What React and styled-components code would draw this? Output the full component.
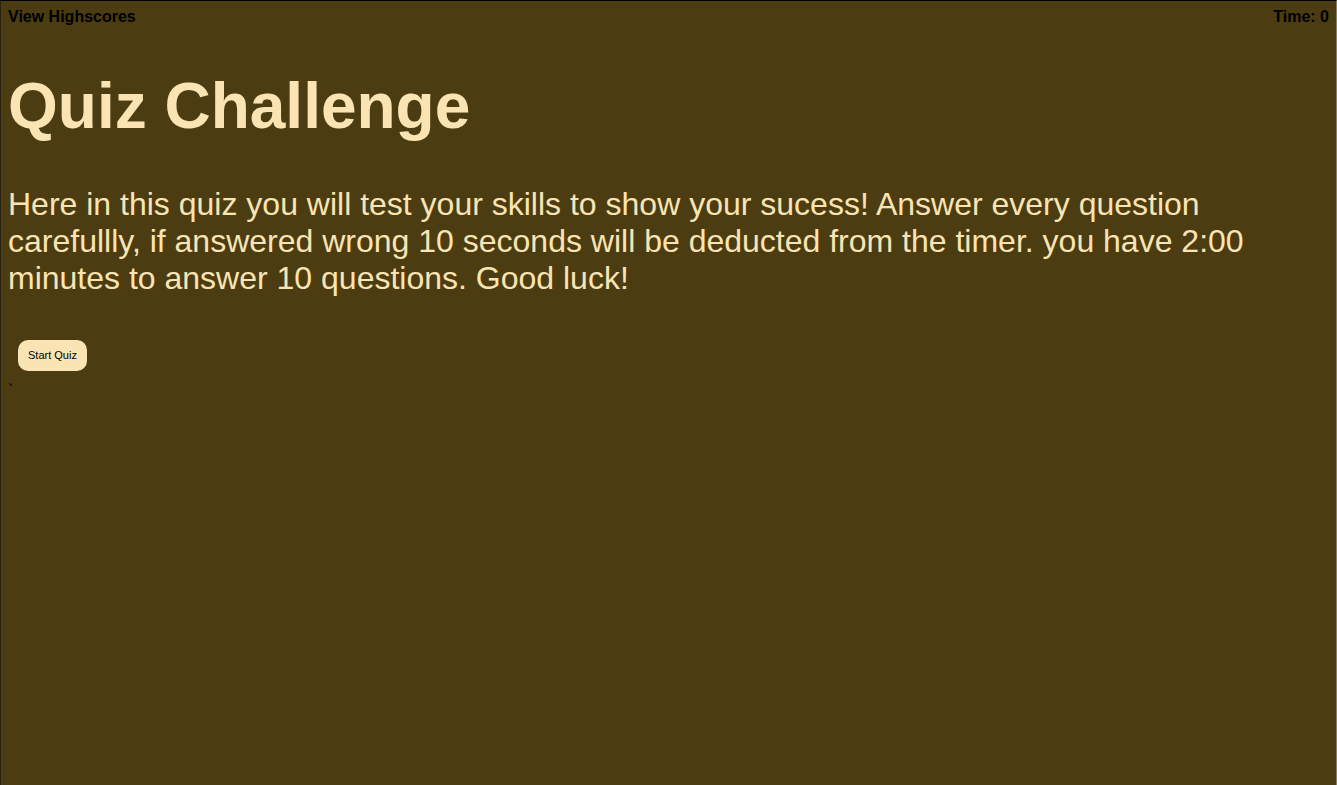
import styled, { createGlobalStyle } from "styled-components";

const GlobalStyle = createGlobalStyle`
  html, body {
    margin: 0;
    height: 100%;
  }
  body {
    font-family: "Liberation Sans", Arial, sans-serif;
    background-color: #4b3c12;
  }
`;

export default () => (
  <Page>
    <GlobalStyle />
    <Header>
      <HeaderItem>View Highscores</HeaderItem>
      <HeaderItem>Time: 0</HeaderItem>
    </Header>
    <Title>Quiz Challenge</Title>
    <Intro>
      Here in this quiz you will test your skills to show your sucess! Answer
      every question carefullly, if answered wrong 10 seconds will be deducted
      from the timer. you have 2:00 minutes to answer 10 questions. Good luck!
    </Intro>
    <StartButton>Start Quiz</StartButton>
    <Stray>`</Stray>
  </Page>
);

const Page = styled.div`
  box-sizing: border-box;
  min-height: 100vh;
  padding: 0 7px;
  background-color: #4b3c12;
  border-top: 1px solid #000;
  border-left: 1px solid #2b2410;
  border-right: 1px solid #8a8060;
  overflow: hidden;
`;

const Header = styled.div`
  display: flex;
  justify-content: space-between;
  padding-top: 7px;
`;

const HeaderItem = styled.span`
  font-size: 16px;
  font-weight: bold;
  color: #000;
`;

const Title = styled.h1`
  font-size: 64px;
  font-weight: bold;
  color: #fae4b4;
  margin: 43px 0;
`;

const Intro = styled.p`
  font-size: 32px;
  color: #fae4b4;
  margin: 32px 0;
`;

const StartButton = styled.button`
  display: block;
  margin: 43px 10px 12px;
  padding: 9px 10px 10px;
  font-family: "Liberation Sans", Arial, sans-serif;
  font-size: 11px;
  color: #000;
  background-color: #fae4b4;
  border: none;
  border-radius: 10px;
`;

const Stray = styled.div`
  font-size: 16px;
  line-height: 1;
  color: #000;
`;
